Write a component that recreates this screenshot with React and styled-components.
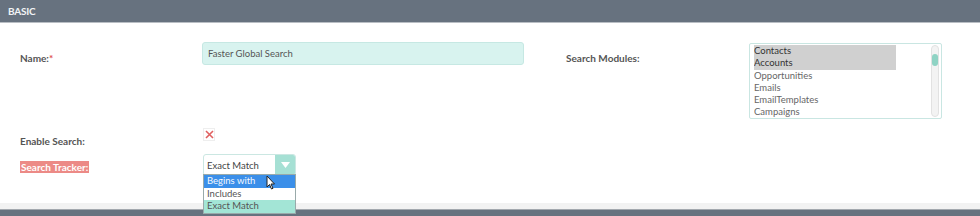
import React from 'react';
import styled, { createGlobalStyle } from 'styled-components';

const Global = createGlobalStyle`
  html, body { margin: 0; padding: 0; background: #fff; }
  body { font-family: Lato, "Open Sans", sans-serif; width: 980px; height: 216px; overflow: hidden; }
`;

const Page = styled.div`
  width: 980px;
  height: 216px;
  display: flex;
  flex-direction: column;
`;

const Header = styled.div`
  height: 22px;
  background: #67727f;
  border-bottom: 1px solid #b9bec4;
  color: #f2f4f6;
  font-size: 10px;
  font-weight: 700;
  display: flex;
  align-items: center;
  padding-left: 8px;
  letter-spacing: -0.2px;
`;

const Body = styled.div`
  flex: 1;
  padding: 19px 0 0 20px;
  display: flex;
  flex-direction: column;
`;

const Row = styled.div`
  display: grid;
  grid-template-columns: 182px 322px 42px 183px 193px;
  align-items: start;
  height: ${({ h }) => h}px;
`;

const Label = styled.div`
  font-size: 10px;
  font-weight: 700;
  color: #555;
  padding-top: ${({ pt }) => pt || 0}px;
  grid-column: ${({ col }) => col || 1};
`;

const Req = styled.span`
  color: #e05050;
`;

const Flag = styled.span`
  background: #ec8a86;
  color: #fff;
  padding: 0 1px;
`;

const TextInput = styled.div`
  height: 23px;
  box-sizing: border-box;
  background: #d8f3ef;
  border: 1px solid #c6e8e3;
  border-radius: 3px;
  font-size: 9.5px;
  color: #555;
  display: flex;
  align-items: center;
  padding-left: 5px;
`;

const ListBox = styled.div`
  grid-column: 5;
  margin-top: 1px;
  height: 76px;
  box-sizing: border-box;
  border: 1px solid #c9e6e2;
  border-radius: 2px;
  display: flex;
  padding: 1px 1px 1px 4px;
`;

const Options = styled.div`
  flex: 1;
  overflow: hidden;
`;

const Opt = styled.div`
  width: 142px;
  height: 12.3px;
  line-height: 12.3px;
  font-size: 9.5px;
  color: ${({ sel }) => (sel ? '#333' : '#666')};
  background: ${({ sel }) => (sel ? '#d0d0d0' : 'transparent')};
`;

const Scroll = styled.div`
  width: 8px;
  margin-right: 1px;
  border: 1px solid #e2e2e2;
  border-radius: 4px;
  background: #f3f3f3;
  box-sizing: border-box;
  padding-top: 8px;
`;

const Thumb = styled.div`
  width: 6px;
  height: 12px;
  border-radius: 3px;
  background: #8fd3c4;
`;

const CheckBox = styled.div`
  width: 12px;
  height: 13px;
  margin-top: 2px;
  display: flex;
  align-items: center;
  justify-content: center;
  border: 1px solid #eee;
  box-sizing: border-box;
  margin-left: 1px;
`;

const SelectWrap = styled.div`
  position: relative;
  margin-left: 1px;
  width: 93px;
`;

const Select = styled.div`
  height: 22px;
  box-sizing: border-box;
  border: 1px solid #cbe7e2;
  border-radius: 3px;
  display: flex;
  overflow: hidden;
  background: #fff;
`;

const SelectText = styled.div`
  flex: 1;
  font-size: 9.5px;
  color: #444;
  display: flex;
  align-items: center;
  padding-left: 3px;
`;

const Arrow = styled.div`
  width: 20px;
  background: #a6e0d4;
  display: flex;
  align-items: center;
  justify-content: center;
`;

const Menu = styled.div`
  position: absolute;
  top: 20px;
  left: 0;
  width: 93px;
  box-sizing: border-box;
  border: 1px solid #9aa;
  background: #fff;
`;

const MenuItem = styled.div`
  height: 12.5px;
  line-height: 12.5px;
  font-size: 9.5px;
  padding-left: 3px;
  color: ${({ kind }) => (kind === 'hover' ? '#f4f8ff' : '#555')};
  background: ${({ kind }) =>
    kind === 'hover' ? '#3b8fe9' : kind === 'current' ? '#a3e5d6' : '#fff'};
`;

const Cursor = styled.svg`
  position: absolute;
  left: 63px;
  top: 21px;
`;

const Footer = styled.div`
  height: 6px;
  background: #f2f2f2;
`;

const Bar = styled.div`
  height: 6px;
  background: #67727f;
  border-top: 1px solid #a3a8ae;
`;

const modules = ['Contacts', 'Accounts', 'Opportunities', 'Emails', 'EmailTemplates', 'Campaigns'];

export default function App() {
  return (
    <Page>
      <Global />
      <Header>BASIC</Header>
      <Body>
        <Row h={84}>
          <Label pt={10}>
            Name:<Req>*</Req>
          </Label>
          <TextInput>Faster Global Search</TextInput>
          <Label col={4} pt={10}>Search Modules:</Label>
          <ListBox>
            <Options>
              {modules.map((m, i) => (
                <Opt key={m} sel={i < 2}>{m}</Opt>
              ))}
            </Options>
            <Scroll>
              <Thumb />
            </Scroll>
          </ListBox>
        </Row>
        <Row h={28}>
          <Label pt={9}>Enable Search:</Label>
          <CheckBox>
            <svg width="9" height="9" viewBox="0 0 9 9">
              <path d="M1 1L8 8M8 1L1 8" stroke="#e06060" strokeWidth="1.6" />
            </svg>
          </CheckBox>
        </Row>
        <Row h={30}>
          <Label pt={7}>
            <Flag>Search Tracker:</Flag>
          </Label>
          <SelectWrap>
            <Select>
              <SelectText>Exact Match</SelectText>
              <Arrow>
                <svg width="9" height="6" viewBox="0 0 9 6">
                  <path d="M0 0H9L4.5 6Z" fill="#fff" />
                </svg>
              </Arrow>
            </Select>
            <Menu>
              <MenuItem kind="hover">Begins with</MenuItem>
              <MenuItem>Includes</MenuItem>
              <MenuItem kind="current">Exact Match</MenuItem>
            </Menu>
            <Cursor width="10" height="15" viewBox="0 0 10 15">
              <path d="M1 1V12L3.5 9.5L5.5 14L7 13.3L5 9H8.5Z" fill="#fff" stroke="#222" strokeWidth="1" strokeLinejoin="round" />
            </Cursor>
          </SelectWrap>
        </Row>
      </Body>
      <Footer />
      <Bar />
    </Page>
  );
}
